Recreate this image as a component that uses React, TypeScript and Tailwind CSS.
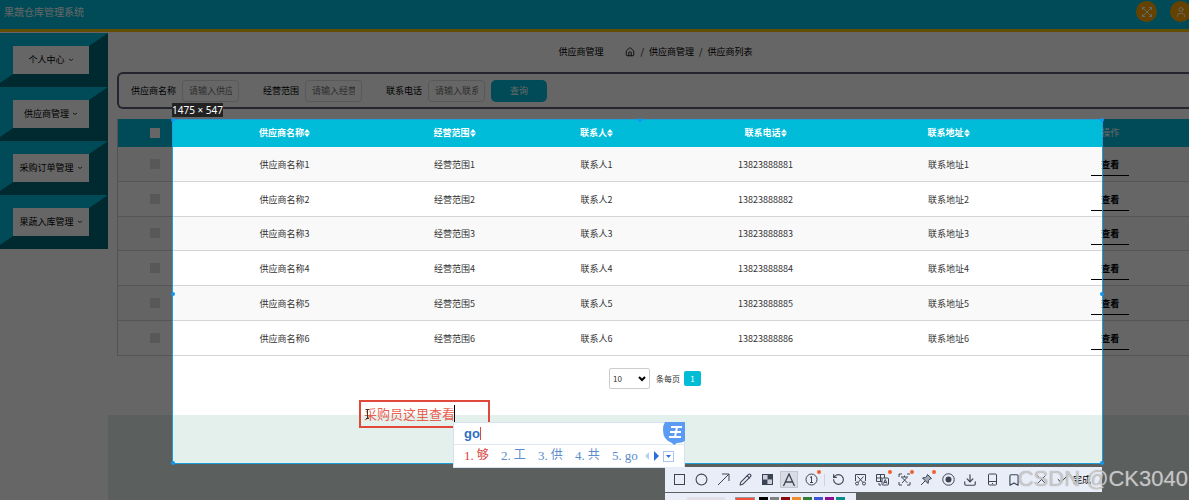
import { useState } from 'react';
import type { ReactNode } from 'react';
import { Bookmark, Check, Circle, Download, House, Pencil, RotateCcw, User, X } from 'lucide-react';

const menu = ['个人中心', '供应商管理', '采购订单管理', '果蔬入库管理'];

const filters = [
  { id: 'name', label: '供应商名称', hint: '请输入供应商名称' },
  { id: 'scope', label: '经营范围', hint: '请输入经营范围' },
  { id: 'phone', label: '联系电话', hint: '请输入联系电话' },
];

const columns = ['供应商名称', '经营范围', '联系人', '联系电话', '联系地址'];

const rows = [1, 2, 3, 4, 5, 6].map((n) => ({
  id: n,
  cells: [`供应商名称${n}`, `经营范围${n}`, `联系人${n}`, `1382388888${n}`, `联系地址${n}`],
}));

const candidates = ['够', '工', '供', '共', 'go'];

const swatches = [
  'bg-black',
  'bg-[#808080]',
  'bg-[#8a0a0a]',
  'bg-[#f08c2e]',
  'bg-[#2e7d32]',
  'bg-[#3f51d8]',
  'bg-[#8e0a8e]',
  'bg-[#0a8a8a]',
];

const handles = [
  'left-[-2px] top-[-2px]',
  'left-1/2 top-[-2px]',
  'right-[-2px] top-[-2px]',
  'left-[-2px] top-1/2',
  'right-[-2px] top-1/2',
  'left-[-2px] bottom-[-2px]',
  'right-[-2px] bottom-[-2px]',
];

function SortIcon() {
  return (
    <svg viewBox="0 0 6 8" className="h-2 w-[6px] fill-white">
      <path d="M3 0 6 3.4H0ZM3 8 0 4.6h6Z" />
    </svg>
  );
}

function Header() {
  return (
    <header className="flex h-8 items-start justify-between border-b-[3px] border-[#f5c400] bg-[#00bcd9] pl-1">
      <h1 className="pt-1 text-[10px] leading-4 text-white">果蔬仓库管理系统</h1>
      <div className="flex gap-[13px] pt-px">
        <button aria-label="全屏" className="flex size-[21px] items-center justify-center rounded-full bg-[#ffa600] text-white">
          <svg viewBox="0 0 12 12" className="size-3 fill-none stroke-current">
            <path d="M1.500 4V1.500H4M8 1.500h2.500V4M10.500 8v2.500H8M4 10.500H1.500V8M1.500 1.500l9 9M10.500 1.500l-9 9" />
          </svg>
        </button>
        <button aria-label="用户" className="-mr-[2px] flex size-[21px] items-center justify-center rounded-full bg-[#ffa600] text-white">
          <User size={12} />
        </button>
      </div>
    </header>
  );
}

function Sidebar() {
  return (
    <nav className="w-[108px] shrink-0 overflow-hidden pt-px">
      <ul className="-ml-[6px]">
        {menu.map((item) => (
          <li
            key={item}
            className="border-x-[19px] border-t-[13px] border-b-[13px] border-t-[#00bcd9] border-r-[#006978] border-b-[#006978] border-l-[#00bcd9]"
          >
            <button className="flex h-7 w-full items-center justify-center gap-[3px] bg-white text-[9px] whitespace-nowrap text-black">
              {item}
              <svg viewBox="0 0 6 4" className="h-1 w-[6px] fill-none stroke-[#444]">
                <path d="m1 1 2 1.5L5 1" />
              </svg>
            </button>
          </li>
        ))}
      </ul>
    </nav>
  );
}

function Filters() {
  return (
    <form onSubmit={(e) => e.preventDefault()} className="flex h-[37px] items-center rounded-l-md border-2 border-r-0 border-[#5c5c78] pl-3">
      {filters.map((f) => (
        <div key={f.id} className="mr-6 flex items-center gap-[6px] last-of-type:mr-[6px]">
          <label htmlFor={f.id} className="text-[9px] text-black">
            {f.label}
          </label>
          <input
            id={f.id}
            placeholder={f.hint}
            className="h-[22px] w-[57px] rounded border border-[#ddd] bg-white px-[6px] text-[9px] placeholder:text-[#757575]"
          />
        </div>
      ))}
      <button className="h-[22px] w-14 rounded-[5px] bg-[#00bcd9] text-[9px] text-white">查询</button>
    </form>
  );
}

function SupplierTable() {
  return (
    <table className="mt-[10px] h-[237px] w-full table-fixed border-collapse border-l border-[#ccc] text-center text-[9px] leading-3 text-[#333]">
      <colgroup>
        <col className="w-[74px]" />
        <col className="w-[186px]" />
        <col className="w-[154px]" />
        <col className="w-[130px]" />
        <col className="w-[208px]" />
        <col className="w-[158px]" />
        <col />
      </colgroup>
      <thead>
        <tr className="h-7 bg-[#00bcd9] text-white">
          <th>
            <input type="checkbox" aria-label="全选" className="mx-auto block size-[10px] appearance-none bg-white" />
          </th>
          {columns.map((c) => (
            <th key={c} className="font-bold">
              <span className="inline-flex items-center">
                {c}
                <SortIcon />
              </span>
            </th>
          ))}
          <th className="pl-1 font-normal">操作</th>
        </tr>
      </thead>
      <tbody>
        {rows.map((r) => (
          <tr key={r.id} className="border-b border-[#d4d4d4] odd:bg-[#f9f9f9]">
            <td>
              <input type="checkbox" aria-label={`选择${r.id}`} className="mx-auto block size-[10px] appearance-none bg-[#dcdcdc]" />
            </td>
            {r.cells.map((c) => (
              <td key={c} className="pt-[2px]">
                {c}
              </td>
            ))}
            <td className="pt-[2px] pl-1">
              <a href="#" className="mx-auto block h-[22px] w-[38px] border-b border-black pt-[5px] font-bold text-black">
                查看
              </a>
            </td>
          </tr>
        ))}
      </tbody>
    </table>
  );
}

function Pagination() {
  const [size, setSize] = useState('10');
  return (
    <div className="flex items-center justify-center pt-3 pb-[26px] pl-1 text-[8px] text-[#333]">
      <span className="relative mr-[6px] flex items-center">
        <select
          id="size"
          value={size}
          onChange={(e) => setSize(e.target.value)}
          className="h-[21px] w-[41px] appearance-none rounded-xs border border-[#ccc] bg-white pl-[3px]"
        >
          <option>10</option>
          <option>20</option>
        </select>
        <svg viewBox="0 0 8 6" className="pointer-events-none absolute right-1 h-[6px] w-2 fill-none stroke-black stroke-2">
          <path d="m1 1 3 3 3-3" />
        </svg>
      </span>
      <label htmlFor="size" className="mr-1">
        条每页
      </label>
      <button className="h-[15px] w-[17px] rounded-xs bg-[#00bcd4] text-white">1</button>
    </div>
  );
}

function Tool({ label, dot, children }: { label: string; dot?: boolean; children: ReactNode }) {
  return (
    <button aria-label={label} className="relative flex h-5 w-[22px] items-center justify-center">
      {children}
      {dot && <i className="absolute top-0 right-[1px] size-1 rounded-full bg-[#f0602c]" />}
    </button>
  );
}

function Toolbar() {
  const svg = 'size-[13px] fill-none stroke-current';
  return (
    <div className="absolute top-[467px] left-[665px]">
      <div className="flex h-[25px] w-[437px] items-center bg-[#e9edf8] pl-[3px] text-[#3c4454]">
        <Tool label="矩形">
          <svg viewBox="0 0 13 13" className={svg}>
            <rect x="1.500" y="1.500" width="10" height="10" />
          </svg>
        </Tool>
        <Tool label="椭圆"><Circle size={13} strokeWidth={2} /></Tool>
        <Tool label="箭头">
          <svg viewBox="0 0 13 13" className={svg}>
            <path d="M1 12 12 1M5 1h7v7" />
          </svg>
        </Tool>
        <Tool label="画笔"><Pencil size={13} strokeWidth={2} /></Tool>
        <Tool label="马赛克">
          <svg viewBox="0 0 13 13" className={svg}>
            <rect x="1.500" y="1.500" width="10" height="10" />
            <path d="M2 2h4.500v4.500H2zM6.500 6.500H11V11H6.500z" className="fill-[#c9cfdb] stroke-none" />
            <path d="M6.500 2H11v4.500H6.500zM2 6.500h4.500V11H2z" className="fill-current stroke-none" />
          </svg>
        </Tool>
        <button aria-label="文字" className="mx-[2px] flex h-[17px] w-[18px] items-center justify-center border border-[#c2c6d0] bg-[#d9dce5]">
          <svg viewBox="0 0 14 14" className="size-[14px] fill-none stroke-current stroke-[1.3]">
            <path d="M1.500 13 7 1l5.500 12M3.500 9h7" />
          </svg>
        </button>
        <Tool label="序号" dot>
          <svg viewBox="0 0 13 13" className={svg}>
            <circle cx="6.5" cy="6.5" r="5.500" />
            <path d="M5 4.500 6.500 3.500V9.500M5 9.500h3" />
          </svg>
        </Tool>
        <span className="mx-[2px] h-3 w-px bg-[#cfd4de]" />
        <Tool label="撤销"><RotateCcw size={13} strokeWidth={2} /></Tool>
        <Tool label="裁剪">
          <svg viewBox="0 0 13 13" className={svg}>
            <path d="M1.500 8V1.500h10V8M3.500 3.500l5.500 6M9.500 3.500 4 9.500" />
            <circle cx="3" cy="10.500" r="1.500" />
            <circle cx="10" cy="10.500" r="1.500" />
          </svg>
        </Tool>
        <Tool label="翻译" dot>
          <svg viewBox="0 0 13 13" className={svg}>
            <path d="M6 8.500H.5V1.500h8V5M4.500 1.500v7M.5 5H6" />
            <rect x="6" y="5" width="6.500" height="7" rx="1" />
            <path d="m7.500 10.500 1.750-4 1.750 4M8 9.500h2.500M3 10v2h2" />
          </svg>
        </Tool>
        <Tool label="文字识别" dot>
          <svg viewBox="0 0 13 13" className={svg}>
            <path d="M1 4V1h3M9 1h3M1 9v3h3M9 12h3V9M3 4h7M6.500 2.500V4M9 4.500 4 10M4 4.500 9.500 10" />
          </svg>
        </Tool>
        <Tool label="贴图" dot>
          <svg viewBox="0 0 13 13" className={svg}>
            <path d="M7.500 1.500 11.500 5.500 10 6 8.500 7.500 8 10.500 2.500 5 5.500 4.500 7 3Z" className="fill-current/40" />
            <path d="M5 8 1 12" />
          </svg>
        </Tool>
        <Tool label="录制">
          <svg viewBox="0 0 13 13" className={svg}>
            <circle cx="6.500" cy="6.500" r="5.750" />
            <circle cx="6.500" cy="6.500" r="3" className="fill-current stroke-none" />
          </svg>
        </Tool>
        <Tool label="保存"><Download size={14} strokeWidth={2} /></Tool>
        <Tool label="手机">
          <svg viewBox="0 0 13 13" className={svg}>
            <rect x="2.500" y="1" width="8" height="11" rx="1" />
            <path d="M2.500 8.500h8M6 10.500h1" />
          </svg>
        </Tool>
        <Tool label="收藏"><Bookmark size={14} strokeWidth={2} /></Tool>
        <span className="w-[5px]" />
        <Tool label="取消"><X size={15} strokeWidth={1.5} /></Tool>
        <button className="flex items-center gap-1 pl-1 text-[9px] text-black">
          <Check size={13} strokeWidth={1.5} />
          完成
        </button>
      </div>
      <div className="mt-px flex h-4 w-[191px] items-start gap-[2px] bg-[#e9edf8] pt-1 pl-[22px]">
        <span className="mr-2 h-3 w-[38px] bg-[#e2dfe8]" />
        <span className="mr-[2px] h-3 w-5 border border-[#999] bg-[#f0503c]" />
        {swatches.map((s) => (
          <span key={s} className={`size-[9px] ${s}`} />
        ))}
      </div>
    </div>
  );
}

function InputMethod() {
  return (
    <div className="absolute top-[422px] left-[453px] w-[232px] border border-[#d5e2f2] bg-white">
      <div className="flex h-[22px] items-center border-b border-[#dfe7f1] pl-[10px]">
        <b className="font-['Liberation_Sans',sans-serif] text-[13px] text-[#2f6fc4]">go</b>
        <span className="h-[13px] w-px bg-[#e04848]" />
        <svg viewBox="0 0 22 24" className="absolute top-[-1px] right-[-1px] h-6 w-[22px]">
          <path d="M2 0h20v19q-3 2-8 2l-3 2-2-2Q0 18 0 8 0 3 2 0Z" fill="#5b9bf3" />
          <path d="M8 5h11M7 10h11M6 15h12M14 5l-2 10" fill="none" stroke="#fff" strokeWidth="2" />
        </svg>
      </div>
      <div className="flex h-[22px] items-center pl-[10px] font-['Liberation_Serif','Noto_Sans_CJK_SC',serif] text-[13px] text-[#5b8ccb]">
        {candidates.map((c, i) => (
          <span key={c} className={i === 0 ? 'flex w-[37px] gap-[3px] text-[#d8453c]' : 'flex w-[37px] gap-[3px]'}>
            <span>{i + 1}.</span>
            <span className={i === 4 ? '' : 'text-[12px]'}>{c}</span>
          </span>
        ))}
        <svg viewBox="0 0 30 12" className="-ml-1 h-3 w-[30px]">
          <path d="M4 2v8L0 6Z" fill="#b9cdf0" />
          <path d="M9 1v10l5-5Z" fill="#2f6be0" />
          <rect x="18.500" y="1.500" width="10" height="10" fill="#fff" stroke="#a9c6ee" />
          <path d="M21 5h5l-2.500 3Z" fill="#2f6be0" />
        </svg>
      </div>
    </div>
  );
}

// screenshot tool lying over the page
function CaptureOverlay() {
  return (
    <div className="absolute inset-0 overflow-hidden">
      <div className="absolute top-[119px] left-[172px] h-[345px] w-[931px] border border-[#1a9fd8] shadow-[0_0_0_2000px_rgba(0,0,0,0.6)]">
        {handles.map((h) => (
          <i key={h} className={`absolute size-1 rounded-full bg-[#1296f0] ${h}`} />
        ))}
      </div>
      <p className="absolute top-[103px] left-[172px] bg-[#222] font-['Noto_Sans',sans-serif] text-[10px] leading-[14px] text-white">1475 × 547</p>

      <div className="absolute top-[400px] left-[359px] flex h-7 w-[131px] items-center border-2 border-[#e0483a] pl-[3px] text-[13px] whitespace-nowrap text-[#e8604f]">
        采购员这里查看
        <span className="-ml-px h-[18px] w-px bg-black" />
        <svg viewBox="0 0 5 10" className="absolute left-[4px] h-[10px] w-[5px] fill-none stroke-[#333]">
          <path d="M1 .5h3M2.500 0v10M1 9.500h3" />
        </svg>
      </div>

      <InputMethod />
      <Toolbar />
      <p className="absolute top-[467px] right-px font-['Liberation_Sans',sans-serif] text-[22px] leading-6 text-[#d0d0d0]/85 [text-shadow:0_0_1px_#999]">CSDN @CK3040</p>
    </div>
  );
}

export default function App() {
  return (
    <div className="relative flex min-h-screen flex-col overflow-hidden bg-white font-['Noto_Sans_CJK_SC',sans-serif]">
      <Header />
      <div className="flex flex-1">
        <Sidebar />
        <main className="flex min-w-0 flex-1 flex-col">
          <div className="pl-[9px]">
            <div className="flex h-10 items-center justify-center pl-[5px] text-[9px] text-black">
              <h2>供应商管理</h2>
              <nav className="ml-[22px] flex items-center gap-[5px]">
                <a href="#" aria-label="首页"><House size={10} strokeWidth={2} /></a>
                <span>/</span>
                <a href="#">供应商管理</a>
                <span>/</span>
                <span>供应商列表</span>
              </nav>
            </div>
            <Filters />
            <SupplierTable />
            <Pagination />
          </div>
          <footer className="min-h-[60px] flex-1 bg-[#e4f0ec]" />
        </main>
      </div>
      <CaptureOverlay />
    </div>
  );
}
